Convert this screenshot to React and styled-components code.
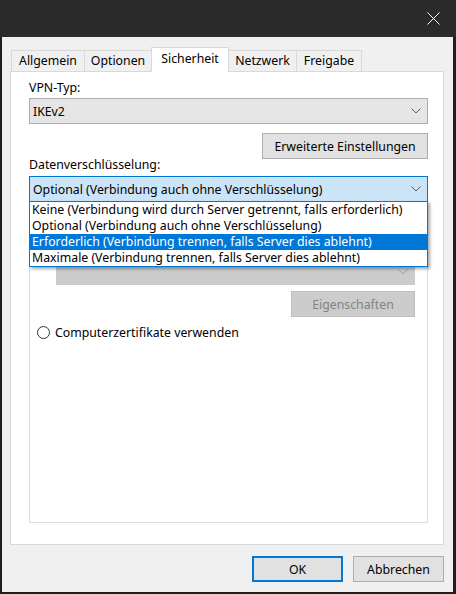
import styled, { createGlobalStyle } from 'styled-components';

const GlobalStyle = createGlobalStyle`
  html, body {
    margin: 0;
    padding: 0;
    background: #1f1f1f;
  }
  body {
    font-family: "Noto Sans", "Liberation Sans", sans-serif;
    font-size: 12.3px;
    color: #000;
  }
`;

const Window = styled.div`
  width: 456px;
  height: 594px;
  box-sizing: border-box;
  display: flex;
  flex-direction: column;
  background: #1f1f1f;
  padding: 0 3px 3px 2px;
`;

const TitleBar = styled.div`
  height: 37px;
  margin: 0 -3px 0 -2px;
  background: #2b2b2b;
  display: flex;
  justify-content: flex-end;
  align-items: flex-start;
`;

const CloseButton = styled.div`
  width: 46px;
  height: 37px;
  display: flex;
  align-items: center;
  justify-content: center;
`;

const Body = styled.div`
  flex: 1;
  background: #f0f0f0;
  padding: 10px 9px 10px 8px;
  display: flex;
  flex-direction: column;
`;

const TabStrip = styled.div`
  height: 25px;
  display: flex;
  align-items: flex-end;
  padding-left: 1px;
`;

const Tab = styled.div`
  position: relative;
  box-sizing: border-box;
  width: ${(p) => p.w}px;
  height: ${(p) => (p.active ? 25 : 22)}px;
  border: 1px solid #d9d9d9;
  border-bottom: none;
  margin-left: -1px;
  background: ${(p) => (p.active ? '#fff' : '#f0f0f0')};
  z-index: ${(p) => (p.active ? 2 : 0)};
  text-align: center;
  line-height: 20px;
  padding-top: ${(p) => (p.active ? 1 : 0)}px;
  &:first-child {
    margin-left: 0;
  }
`;

const Panel = styled.div`
  position: relative;
  z-index: 1;
  margin-top: -1px;
  height: 474px;
  box-sizing: border-box;
  border: 1px solid #d9d9d9;
  background: #fff;
  padding: 0 15px 21px 18px;
  display: flex;
  flex-direction: column;
`;

const Label = styled.div`
  line-height: 16px;
  height: 16px;
  margin-top: ${(p) => p.mt || 0}px;
  white-space: nowrap;
`;

const ComboWrap = styled.div`
  position: relative;
  z-index: ${(p) => (p.open ? 3 : 0)};
  margin-top: ${(p) => p.mt || 0}px;
  margin-left: ${(p) => p.ml || 0}px;
`;

const Combo = styled.div`
  box-sizing: border-box;
  height: 26px;
  border: 1px solid ${(p) => (p.focused ? '#0078d7' : p.disabled ? '#cccccc' : '#adadad')};
  background: ${(p) => (p.focused ? '#cce4f7' : p.disabled ? '#cccccc' : '#e5e5e5')};
  display: flex;
  align-items: center;
  justify-content: space-between;
  padding: 0 6px 0 3px;
  white-space: nowrap;
`;

const Chevron = ({ color = '#606060' }) => (
  <svg width="10" height="6" viewBox="0 0 10 6">
    <polyline points="0.5,0.5 5,5 9.5,0.5" fill="none" stroke={color} strokeWidth="1" />
  </svg>
);

const DropList = styled.div`
  position: absolute;
  left: 0;
  right: 0;
  top: 100%;
  margin-top: -1px;
  box-sizing: border-box;
  border: 1px solid #0078d7;
  background: #fff;
  box-shadow: 2px 2px 3px rgba(0, 0, 0, 0.35);
`;

const Item = styled.div`
  height: 16px;
  line-height: 16px;
  padding-left: 2px;
  white-space: nowrap;
  background: ${(p) => (p.selected ? '#0078d7' : 'transparent')};
  color: ${(p) => (p.selected ? '#fff' : '#000')};
`;

const Button = styled.div`
  box-sizing: border-box;
  width: ${(p) => p.w}px;
  height: 26px;
  border: ${(p) => (p.primary ? '2px solid #0078d7' : p.disabled ? '1px solid #bfbfbf' : '1px solid #adadad')};
  background: ${(p) => (p.disabled ? '#cccccc' : '#e1e1e1')};
  color: ${(p) => (p.disabled ? '#838383' : '#000')};
  display: flex;
  align-items: center;
  justify-content: center;
  white-space: nowrap;
  margin-top: ${(p) => p.mt || 0}px;
  margin-left: ${(p) => (p.right ? 'auto' : '0')};
`;

const GroupFrame = styled.div`
  flex: 1;
  margin-top: 3px;
  border: 1px solid #dcdcdc;
  padding: 53px 12px 0 7px;
  display: flex;
  flex-direction: column;
`;

const RadioRow = styled.div`
  display: flex;
  align-items: center;
  gap: 5px;
  margin-top: 8px;
  height: 14px;
  white-space: nowrap;
`;

const RadioCircle = styled.div`
  width: 13px;
  height: 13px;
  box-sizing: border-box;
  border: 1px solid #333;
  border-radius: 50%;
  background: #fff;
`;

const Footer = styled.div`
  display: flex;
  justify-content: flex-end;
  gap: 10px;
  margin-top: 11px;
`;

const tabs = [
  { label: 'Allgemein', w: 74 },
  { label: 'Optionen', w: 68 },
  { label: 'Sicherheit', w: 78, active: true },
  { label: 'Netzwerk', w: 69 },
  { label: 'Freigabe', w: 66 },
];

const options = [
  'Keine (Verbindung wird durch Server getrennt, falls erforderlich)',
  'Optional (Verbindung auch ohne Verschlüsselung)',
  'Erforderlich (Verbindung trennen, falls Server dies ablehnt)',
  'Maximale (Verbindung trennen, falls Server dies ablehnt)',
];

export default function App() {
  return (
    <>
      <GlobalStyle />
      <Window>
        <TitleBar>
          <CloseButton>
            <svg width="13" height="13" viewBox="0 0 13 13">
              <path d="M0.5 0.5 L12.5 12.5 M12.5 0.5 L0.5 12.5" stroke="#fff" strokeWidth="1" />
            </svg>
          </CloseButton>
        </TitleBar>
        <Body>
          <TabStrip>
            {tabs.map((t) => (
              <Tab key={t.label} w={t.w} active={t.active}>
                {t.label}
              </Tab>
            ))}
          </TabStrip>
          <Panel>
            <Label mt={8}>VPN-Typ:</Label>
            <ComboWrap mt={2}>
              <Combo>
                <span>IKEv2</span>
                <Chevron />
              </Combo>
            </ComboWrap>
            <Button w={166} mt={9} right>
              Erweiterte Einstellungen
            </Button>
            <Label mt={-2}>Datenverschlüsselung:</Label>
            <ComboWrap mt={3} open>
              <Combo focused>
                <span>{options[1]}</span>
                <Chevron />
              </Combo>
              <DropList>
                {options.map((o, i) => (
                  <Item key={o} selected={i === 2}>
                    {o}
                  </Item>
                ))}
              </DropList>
            </ComboWrap>
            <GroupFrame>
              <ComboWrap ml={19}>
                <Combo disabled>
                  <span />
                  <Chevron color="#a0a0a0" />
                </Combo>
              </ComboWrap>
              <Button w={124} mt={6} right disabled>
                Eigenschaften
              </Button>
              <RadioRow>
                <RadioCircle />
                <span>Computerzertifikate verwenden</span>
              </RadioRow>
            </GroupFrame>
          </Panel>
          <Footer>
            <Button w={91} primary>
              OK
            </Button>
            <Button w={91}>Abbrechen</Button>
          </Footer>
        </Body>
      </Window>
    </>
  );
}
